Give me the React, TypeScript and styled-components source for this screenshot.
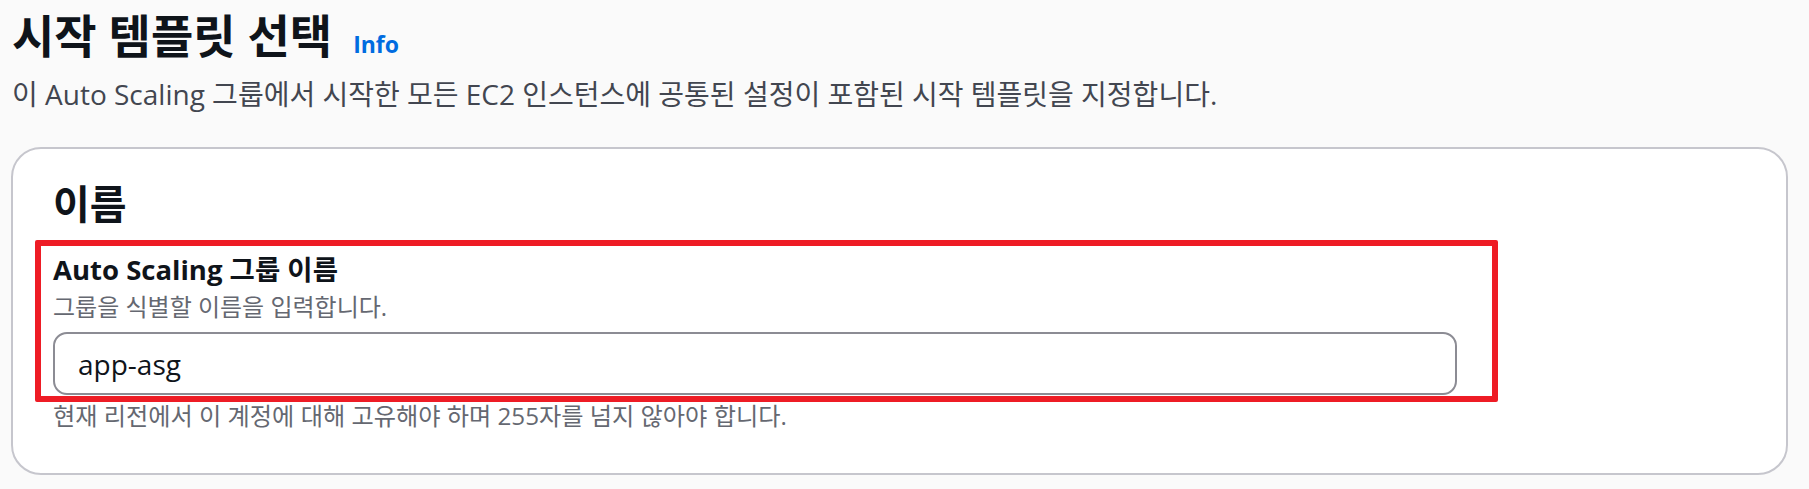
import React from "react";
import styled, { createGlobalStyle } from "styled-components";

const FONT = `"Open Sans", "Noto Sans CJK KR", sans-serif`;

const GlobalStyle = createGlobalStyle`
  html, body {
    margin: 0;
    padding: 0;
    background: #fafafa;
  }
  body {
    font-family: ${FONT};
    color: #0f141a;
  }
  * { box-sizing: border-box; }
`;

const Page = styled.main`
  display: flex;
  flex-direction: column;
  padding: 7px 21px 12px 11px;
`;

const Header = styled.header`
  display: flex;
  flex-direction: column;
  gap: 11px;
  padding-left: 1px;
`;

const TitleRow = styled.div`
  display: flex;
  align-items: baseline;
  gap: 21px;
`;

const Title = styled.h1`
  margin: 0;
  font-size: 46px;
  line-height: 56px;
  font-weight: 700;
  color: #0f141a;
`;

const InfoLink = styled.a`
  font-size: 23px;
  font-weight: 700;
  color: #006ce0;
  text-decoration: none;
  cursor: pointer;
`;

const Description = styled.p`
  margin: 0;
  font-size: 28px;
  line-height: 40px;
  color: #424650;
`;

const Card = styled.section`
  margin-top: 33px;
  background: #ffffff;
  border: 2px solid #c6c6cd;
  border-radius: 30px;
  padding: 31px 22px 41px 22px;
  display: flex;
  flex-direction: column;
`;

const CardTitle = styled.h2`
  margin: 0 0 0 18px;
  font-size: 40px;
  line-height: 48px;
  font-weight: 700;
  color: #0f141a;
`;

const Highlight = styled.div`
  margin-top: 12px;
  width: 1463px;
  border: 6px solid #ee1c25;
  border-radius: 2px;
  padding: 4px 35px 1px 12px;
  display: flex;
  flex-direction: column;
`;

const Label = styled.label`
  font-size: 27.5px;
  line-height: 39px;
  font-weight: 700;
  color: #0f141a;
`;

const Hint = styled.div<{ $indent?: boolean }>`
  font-size: 24px;
  line-height: 32px;
  color: #656871;
  margin-left: ${(p) => (p.$indent ? "18px" : "0")};
`;

const FieldHint = styled(Hint)`
  margin-top: 2px;
`;

const Input = styled.input`
  margin-top: 9px;
  width: 1404px;
  height: 63px;
  border: 2px solid #8c8c94;
  border-radius: 14px;
  padding: 0 23px;
  font-family: ${FONT};
  font-size: 28px;
  color: #0f141a;
  background: #ffffff;
  outline: none;
`;

const Constraint = styled(Hint)`
  margin-top: -2px;
  font-size: 24.2px;
`;

export default function App() {
  return (
    <>
      <GlobalStyle />
      <Page>
        <Header>
          <TitleRow>
            <Title>시작 템플릿 선택</Title>
            <InfoLink>Info</InfoLink>
          </TitleRow>
          <Description>
            이 Auto Scaling 그룹에서 시작한 모든 EC2 인스턴스에 공통된 설정이 포함된 시작 템플릿을 지정합니다.
          </Description>
        </Header>
        <Card>
          <CardTitle>이름</CardTitle>
          <Highlight>
            <Label htmlFor="asg-name">Auto Scaling 그룹 이름</Label>
            <FieldHint>그룹을 식별할 이름을 입력합니다.</FieldHint>
            <Input id="asg-name" defaultValue="app-asg" />
          </Highlight>
          <Constraint $indent>
            현재 리전에서 이 계정에 대해 고유해야 하며 255자를 넘지 않아야 합니다.
          </Constraint>
        </Card>
      </Page>
    </>
  );
}
